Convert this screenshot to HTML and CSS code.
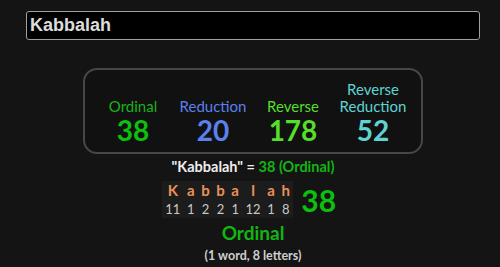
FILE: index.html
```html
<!DOCTYPE html>
<html>
<head>
<meta charset="utf-8">
<link rel="stylesheet" href="styles.css">
</head>
<body>
<div class="search">
  <input class="search-input" type="text" value="Kabbalah">
</div>
<div class="main">
  <div class="summary">
    <div class="col ord"><div class="label">Ordinal</div><div class="num">38</div></div>
    <div class="col red"><div class="label">Reduction</div><div class="num">20</div></div>
    <div class="col rev"><div class="label">Reverse</div><div class="num">178</div></div>
    <div class="col rr"><div class="label">Reverse<br>Reduction</div><div class="num">52</div></div>
  </div>
  <div class="equation"><span class="phrase">"Kabbalah" =</span> <span class="green">38 (Ordinal)</span></div>
  <div class="breakdown">
    <table class="letters">
      <tr class="lrow"><td>K</td><td>a</td><td>b</td><td>b</td><td>a</td><td>l</td><td>a</td><td>h</td></tr>
      <tr class="nrow"><td>11</td><td>1</td><td>2</td><td>2</td><td>1</td><td>12</td><td>1</td><td>8</td></tr>
    </table>
    <div class="total">38</div>
  </div>
  <div class="cipher">Ordinal</div>
  <div class="count">(1 word, 8 letters)</div>
</div>
</body>
</html>
```
FILE: styles.css
```css
html, body {
  margin: 0;
  padding: 0;
  background: #141414;
}
body {
  font-family: Lato, "Open Sans", sans-serif;
  color: #ddd;
  width: 500px;
  height: 267px;
  overflow: hidden;
}
.search {
  padding: 11px 0 0 26px;
}
.search-input {
  box-sizing: border-box;
  width: 454px;
  height: 29px;
  margin: 0;
  background: #000;
  border: 1px solid #a0a0a0;
  border-radius: 3px;
  color: #dcdcdc;
  font-family: "Liberation Sans", Arial, sans-serif;
  font-weight: bold;
  font-size: 18px;
  padding: 0 3px;
  outline: none;
  display: block;
}
.main {
  padding-left: 6px;
  display: flex;
  flex-direction: column;
  align-items: center;
  text-align: center;
}
.summary {
  margin-top: 28px;
  box-sizing: border-box;
  width: 340px;
  height: 86px;
  border: 2px solid #474747;
  border-radius: 14px;
  background: #111;
  padding: 10px 8px 8px;
  display: flex;
  align-items: flex-end;
}
.col {
  width: 80px;
}
.label {
  font-size: 15px;
  line-height: 17px;
}
.num {
  font-size: 28px;
  font-weight: bold;
  line-height: 28px;
  margin-top: 1px;
}
.ord { color: #19b319; }
.ord .num { color: #0dc00d; }
.red { color: #5c80ee; }
.rev { color: #55df2a; }
.rr { color: #5fd3d3; }
.equation {
  margin-top: 4px;
  font-size: 14.5px;
  font-weight: bold;
  line-height: 17px;
  color: #eee;
}
.green {
  color: #12b512;
}
.breakdown {
  margin-top: 6px;
  margin-left: -8px;
  display: flex;
  align-items: center;
  gap: 8px;
}
.letters {
  border-collapse: collapse;
  background: #1c1c1c;
}
.letters td {
  padding: 0 3.3px;
  text-align: center;
}
.lrow td {
  color: #e8915a;
  font-weight: bold;
  font-size: 15px;
  line-height: 19px;
}
.nrow td {
  color: #c8c8c8;
  font-size: 13px;
  line-height: 18px;
}
.total {
  color: #0dc00d;
  font-size: 30px;
  font-weight: bold;
  line-height: 32px;
}
.cipher {
  margin-top: 4px;
  color: #12b512;
  font-weight: bold;
  font-size: 19px;
  line-height: 22px;
}
.count {
  margin-top: 4px;
  color: #cfcfcf;
  font-weight: bold;
  font-size: 12.5px;
  line-height: 16px;
}
```
